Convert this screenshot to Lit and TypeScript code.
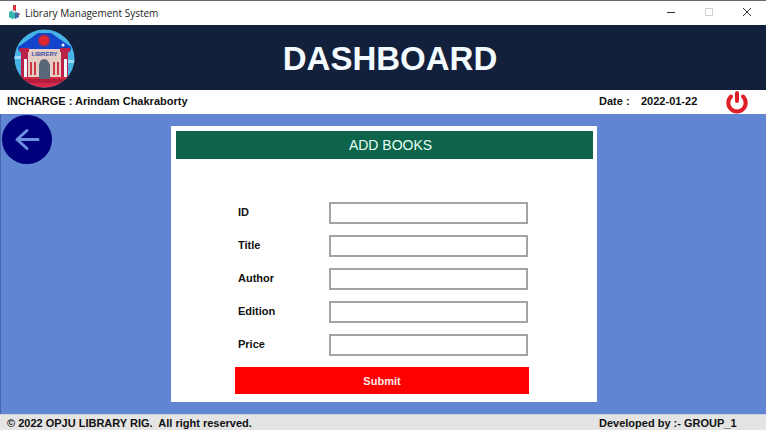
import { LitElement, html, css } from "lit";
import { customElement, state } from "lit/decorators.js";

@customElement("library-logo")
class LibraryLogo extends LitElement {
  static styles = css`
    :host { display: block; line-height: 0; }
    .mark { font: bold 6px "Liberation Sans", Arial, sans-serif; }
  `;

  render() {
    return html`
      <svg width="61" height="59" viewBox="0 0 61 59" role="img" aria-label="Library">
        <defs>
          <clipPath id="disc"><ellipse cx="30.5" cy="29.5" rx="30" ry="29" /></clipPath>
        </defs>
        <g clip-path="url(#disc)">
          <rect width="61" height="59" fill="#47b4e6" />
          <path d="M0 27h7v3H0zM53 31h8v3h-8z" fill="#9bdcf4" />
          <path d="M4 18 24 4h13l20 14v3H4z" fill="#1146cc" />
          <rect x="14" y="20" width="33" height="29" fill="#e3cdc4" />
          <path d="M6 19h9v4h-1v26H7V23H5zM46 19h10v4h-2v26h-7V23h-1z" fill="#bb2148" />
          <rect x="10" y="30" width="3" height="18" fill="#f2f6ff" />
          <rect x="50" y="30" width="3" height="18" fill="#f2f6ff" />
          <path d="M16 33h2v13h-2zM20 33h2v13h-2zM39 33h2v13h-2zM43 33h2v13h-2z" fill="#cf3845" />
          <rect x="4" y="48" width="53" height="3" fill="#d52c43" />
          <path d="M25 50V36q1-6 5-6t6 6v14z" fill="#596779" />
          <rect x="4" y="50" width="54" height="4" fill="#b51d3c" />
          <rect x="4" y="54" width="54" height="5" fill="#d8284a" />
        </g>
        <circle cx="30" cy="11.500" r="6.500" fill="#6d3184" />
        <circle cx="30" cy="11.500" r="5" fill="#e0262f" />
        <circle cx="49" cy="16" r="1.500" fill="#fff" />
        <text class="mark" x="30.500" y="27" text-anchor="middle" fill="#3b4fa3">LIBRERY</text>
      </svg>
    `;
  }
}

@customElement("window-bar")
class WindowBar extends LitElement {
  static styles = css`
    :host {
      display: flex;
      align-items: center;
      box-sizing: border-box;
      height: 25px;
      padding-left: 8px;
      border-top: 1px solid #6a6a6a;
      background: #fff;
      color: #222;
      font: 10px "Open Sans", "Noto Sans", sans-serif;
    }
    .title { flex: 1; margin-left: 4px; }
    svg { display: block; }
    button {
      display: flex;
      align-items: center;
      justify-content: center;
      width: 38px;
      height: 24px;
      padding: 0 1px 2px 0;
      border: 0;
      background: none;
    }
  `;

  render() {
    return html`
      <svg width="13" height="16" viewBox="0 0 13 16" aria-hidden="true">
        <path d="M5 0h3v6H5z" fill="#d9323c" />
        <path d="M1 7l4-2 3 2v6l-4 1-3-2z" fill="#35b5ae" />
        <path d="M7 7l4 1v4l-4 2z" fill="#3e6fa8" />
        <path d="M4 6l2-1 2 2-2 1z" fill="#d5e9ee" />
        <circle cx="11" cy="9" r="1" fill="#c2547c" />
      </svg>
      <span class="title">Library Management System</span>
      <button aria-label="Minimize">
        <svg width="10" height="10" viewBox="0 0 10 10"><path d="M1 5.500h8" stroke="#333" /></svg>
      </button>
      <button aria-label="Maximize" disabled>
        <svg width="10" height="10" viewBox="0 0 10 10"><path d="M1.500 1.500h7v7h-7z" fill="none" stroke="#d0d0d0" /></svg>
      </button>
      <button aria-label="Close">
        <svg width="10" height="10" viewBox="0 0 10 10"><path d="M1 1l8 8M9 1l-8 8" stroke="#333" /></svg>
      </button>
    `;
  }
}

@customElement("book-form")
class BookForm extends LitElement {
  static styles = css`
    :host {
      display: block;
      box-sizing: border-box;
      width: 426px;
      max-width: 100%;
      padding: 5px 4px 8px 5px;
      background: #fff;
    }
    h2 {
      margin: 0;
      padding-left: 12px;
      background: #0d644b;
      color: #e4fff5;
      font-size: 14px;
      font-weight: 400;
      line-height: 28px;
      text-align: center;
    }
    form {
      display: grid;
      gap: 11px;
      margin: 43px 64px 0 59px;
    }
    .row {
      display: grid;
      grid-template-columns: 91px 1fr;
      align-items: center;
      margin: 0 1px 0 3px;
    }
    label { padding-bottom: 2px; font-size: 11px; font-weight: 700; line-height: 20px; }
    input {
      box-sizing: border-box;
      width: 100%;
      min-width: 0;
      height: 22px;
      padding: 0 4px;
      border: 2px solid #a3a3a3;
      border-radius: 0;
      background: #fff;
      font: inherit;
    }
    button {
      height: 27px;
      padding: 0;
      border: 0;
      background: #fe0000;
      color: #ffe9e9;
      font: bold 11px "Liberation Sans", Arial, sans-serif;
    }
  `;

  @state() private fields = ["ID", "Title", "Author", "Edition", "Price"];

  render() {
    return html`
      <h2>ADD BOOKS</h2>
      <form @submit=${(e: Event) => e.preventDefault()}>
        ${this.fields.map(
          (name) => html`
            <div class="row">
              <label for=${name.toLowerCase()}>${name}</label>
              <input id=${name.toLowerCase()} name=${name.toLowerCase()} type="text" />
            </div>
          `
        )}
        <button type="submit">Submit</button>
      </form>
    `;
  }
}

@customElement("app-root")
class AppRoot extends LitElement {
  static styles = css`
    :host {
      display: flex;
      flex-direction: column;
      min-height: 100vh;
      background: #6086d3;
      color: #111;
      font-family: "Liberation Sans", Arial, sans-serif;
    }
    header {
      display: grid;
      grid-template-columns: 1fr auto 1fr;
      align-items: center;
      height: 65px;
      padding-left: 14px;
      background: #12203c;
    }
    library-logo { padding-top: 2px; }
    h1 {
      margin: 0;
      padding-top: 2px;
      color: #f4fbff;
      font-size: 33px;
      line-height: 40px;
    }
    .info,
    footer {
      display: grid;
      grid-template-columns: 1fr 160px;
      align-items: center;
      padding: 0 7px;
      font-size: 11px;
      font-weight: 700;
    }
    .info { height: 24px; background: #fff; }
    .today { display: flex; align-items: center; }
    .incharge,
    .date,
    time { padding-bottom: 2px; }
    .date { flex: none; width: 42px; }
    time { flex: 1; }
    .power,
    .back {
      display: block;
      padding: 0;
      border: 0;
      background: none;
      line-height: 0;
    }
    .power { margin-right: 11px; }
    main {
      flex: 1;
      display: grid;
      grid-template-columns: 1fr auto 1fr;
      align-items: start;
      padding-left: 1px;
      border-left: 1px solid #4667ad;
    }
    .back { justify-self: start; margin-top: 1px; }
    book-form { margin: 12px 0; }
    footer {
      box-sizing: border-box;
      height: 16px;
      border-top: 1px solid #cdd3e0;
      background: #e4e4e4;
      white-space: pre;
    }
  `;

  render() {
    return html`
      <window-bar></window-bar>
      <header>
        <library-logo></library-logo>
        <h1>DASHBOARD</h1>
      </header>
      <div class="info">
        <span class="incharge">INCHARGE : Arindam Chakraborty</span>
        <div class="today">
          <span class="date">Date :</span>
          <time datetime="2022-01-22">2022-01-22</time>
          <button class="power" aria-label="Log out">
            <svg width="22" height="24" viewBox="0 0 22 24">
              <path d="M5 6.500A8.700 8.700 0 1 0 17 6.500" fill="none" stroke="#df1f26" stroke-width="4" stroke-linecap="round" />
              <path d="M11 3v8" stroke="#df1f26" stroke-width="4" stroke-linecap="round" />
            </svg>
          </button>
        </div>
      </div>
      <main>
        <button class="back" aria-label="Back">
          <svg width="50" height="49" viewBox="0 0 50 49">
            <ellipse cx="25" cy="24.500" rx="25" ry="24.500" fill="#00007c" />
            <path d="M36 24.500H15M25 15.500l-10 9 10 9" fill="none" stroke="#6b93e0" stroke-width="3" stroke-linecap="round" stroke-linejoin="round" />
          </svg>
        </button>
        <book-form></book-form>
      </main>
      <footer>
        <span>© 2022 OPJU LIBRARY RIG.  All right reserved.</span>
        <span>Developed by :- GROUP_1</span>
      </footer>
    `;
  }
}
